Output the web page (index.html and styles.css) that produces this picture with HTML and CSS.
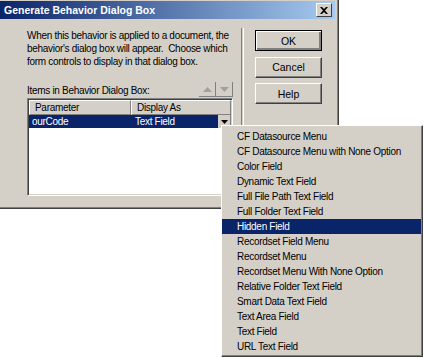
FILE: index.html
```html
<!DOCTYPE html>
<html lang="en">
<head>
    <meta charset="UTF-8">
    <title>Generate Behavior Dialog Box</title>
    <link rel="stylesheet" href="styles.css">
</head>
<body>
    <div class="dialog">
        <div class="titlebar">
            <span class="title">Generate Behavior Dialog Box</span>
            <span class="close-btn">
                <svg width="8" height="7" viewBox="0 0 8 7"><path d="M0 0h2l2 2 2-2h2L5 3.5 8 7H6L4 5 2 7H0l3-3.5z" fill="#000"/></svg>
            </span>
        </div>
        <div class="dialog-body">
            <div class="left-col">
                <p class="intro">When this behavior is applied to a document, the behavior's dialog box will appear.&nbsp; Choose which form controls to display in that dialog box.</p>
                <div class="list-head">
                    <span class="list-label">Items in Behavior Dialog Box:</span>
                    <div class="arrows">
                        <span class="arrow-btn"><svg width="9" height="5" viewBox="0 0 9 5"><path d="M4.5 0L9 5H0z" fill="#a0a0a0"/></svg></span>
                        <span class="arrow-btn"><svg width="9" height="5" viewBox="0 0 9 5"><path d="M0 0h9L4.5 5z" fill="#a0a0a0"/></svg></span>
                    </div>
                </div>
                <div class="listbox">
                    <div class="list-header">
                        <span class="col col-param">Parameter</span>
                        <span class="col col-display">Display As</span>
                    </div>
                    <div class="list-row selected">
                        <span class="cell cell-param">ourCode</span>
                        <span class="cell cell-display">Text Field</span>
                        <span class="drop-btn"><svg width="7" height="4" viewBox="0 0 7 4"><path d="M0 0h7L3.5 4z" fill="#000"/></svg></span>
                    </div>
                </div>
            </div>
            <div class="separator"></div>
            <div class="buttons">
                <button class="btn btn-default">OK</button>
                <button class="btn">Cancel</button>
                <button class="btn">Help</button>
            </div>
        </div>
    </div>

    <ul class="menu">
        <li>CF Datasource Menu</li>
        <li>CF Datasource Menu with None Option</li>
        <li>Color Field</li>
        <li>Dynamic Text Field</li>
        <li>Full File Path Text Field</li>
        <li>Full Folder Text Field</li>
        <li class="active">Hidden Field</li>
        <li>Recordset Field Menu</li>
        <li>Recordset Menu</li>
        <li>Recordset Menu With None Option</li>
        <li>Relative Folder Text Field</li>
        <li>Smart Data Text Field</li>
        <li>Text Area Field</li>
        <li>Text Field</li>
        <li>URL Text Field</li>
    </ul>
</body>
</html>
```

FILE: styles.css
```css
body {
    margin: 0;
    background-color: #fff;
    font-family: "Liberation Sans", Arial, sans-serif;
    font-size: 10px;
    letter-spacing: -0.3px;
    color: #000;
    position: relative;
    width: 424px;
    height: 358px;
    overflow: hidden;
}
.dialog {
    width: 338px;
    height: 208px;
    background-color: #d4d0c8;
    border-right: 1px solid #404040;
    border-bottom: 1px solid #404040;
    box-shadow: inset -1px -1px 0 #808080;
    overflow: hidden;
}
.titlebar {
    height: 18px;
    margin: 1px 3px 0 0;
    background: linear-gradient(to right, #0a246a, #a6caf0);
    display: flex;
    align-items: center;
    justify-content: space-between;
    padding: 0 3px 0 4px;
}
.title {
    color: #fff;
    font-weight: bold;
    font-size: 10.5px;
    letter-spacing: 0;
}
.close-btn {
    width: 14px;
    height: 12px;
    background-color: #d4d0c8;
    border-top: 1px solid #fff;
    border-left: 1px solid #fff;
    border-right: 1px solid #404040;
    border-bottom: 1px solid #404040;
    display: flex;
    align-items: center;
    justify-content: center;
}
.dialog-body {
    display: flex;
    padding: 10px 0 0 27px;
}
.left-col {
    width: 206px;
}
.intro {
    margin: 0;
    width: 215px;
    line-height: 13px;
}
.list-head {
    display: flex;
    justify-content: space-between;
    align-items: flex-end;
    margin-top: 13px;
    height: 17px;
}
.list-label {
    line-height: 13px;
    padding-bottom: 1px;
}
.arrows {
    display: flex;
    margin-bottom: 1px;
}
.arrow-btn {
    width: 17px;
    height: 15px;
    display: flex;
    align-items: center;
    justify-content: center;
    border-right: 1px solid #808080;
    border-bottom: 1px solid #808080;
    box-sizing: border-box;
}
.listbox {
    height: 98px;
    background-color: #fff;
    border-top: 1px solid #808080;
    border-left: 1px solid #808080;
    border-right: 1px solid #fff;
    border-bottom: 1px solid #fff;
    box-shadow: inset 1px 1px 0 #404040, inset -1px -1px 0 #d4d0c8;
    padding: 1px;
    box-sizing: border-box;
}
.list-header {
    display: flex;
    height: 15px;
}
.col {
    background-color: #d4d0c8;
    border-top: 1px solid #fff;
    border-left: 1px solid #fff;
    border-right: 1px solid #808080;
    border-bottom: 1px solid #808080;
    box-sizing: border-box;
    line-height: 13px;
    padding-left: 5px;
}
.col-param {
    width: 102px;
}
.col-display {
    flex: 1;
}
.list-row {
    display: flex;
    height: 13px;
    line-height: 13px;
    position: relative;
}
.selected {
    background-color: #0a246a;
    color: #fff;
}
.cell-param {
    width: 103px;
    padding-left: 3px;
}
.drop-btn {
    position: absolute;
    right: 0;
    top: 0;
    width: 13px;
    height: 13px;
    background-color: #d4d0c8;
    display: flex;
    align-items: center;
    justify-content: center;
    box-sizing: border-box;
    border-right: 1px solid #808080;
}
.separator {
    width: 1px;
    height: 168px;
    margin: -1px 0 0 8px;
    border-left: 1px solid #808080;
    border-right: 1px solid #fff;
}
.buttons {
    display: flex;
    flex-direction: column;
    gap: 5.5px;
    margin-left: 11px;
    padding-top: 1px;
}
.btn {
    width: 67px;
    height: 21px;
    background-color: #d4d0c8;
    font-family: "Liberation Sans", Arial, sans-serif;
    font-size: 10.5px;
    color: #000;
    border-top: 1px solid #fff;
    border-left: 1px solid #fff;
    border-right: 1px solid #404040;
    border-bottom: 1px solid #404040;
    box-shadow: inset -1px -1px 0 #808080;
    padding: 0;
}
.btn-default {
    border: 1px solid #000;
    box-shadow: inset 1px 1px 0 #fff, inset -2px -2px 0 #808080;
}
.menu {
    position: absolute;
    left: 221px;
    top: 125px;
    width: 202px;
    height: 232px;
    margin: 0;
    padding: 3px 0 2px;
    list-style: none;
    background-color: #d4d0c8;
    border-top: 1px solid #fff;
    border-left: 1px solid #fff;
    border-right: 1px solid #404040;
    border-bottom: 1px solid #404040;
    box-shadow: inset -1px -1px 0 #808080;
    box-sizing: border-box;
}
.menu li {
    height: 15px;
    line-height: 15px;
    padding-left: 15px;
    margin-right: 1px;
    white-space: nowrap;
}
.menu li.active {
    background-color: #0a246a;
    color: #fff;
}
```
